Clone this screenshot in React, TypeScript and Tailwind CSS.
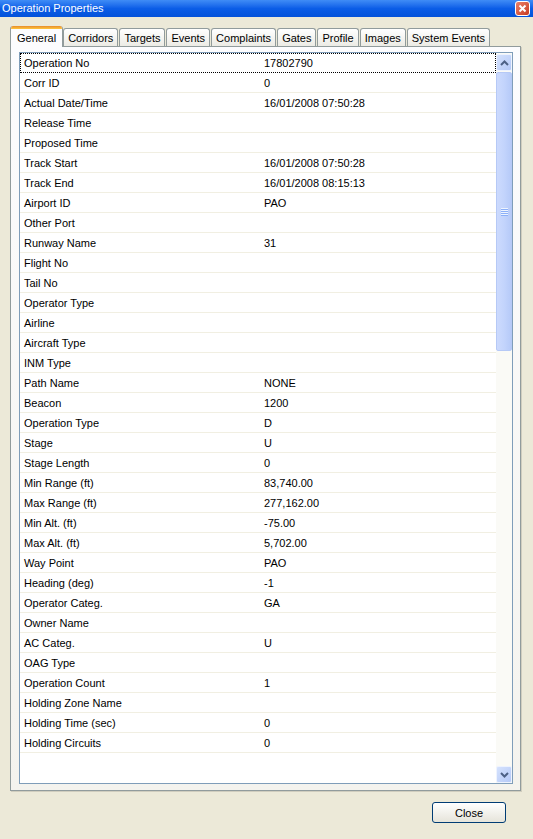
import React from "react";

const rows: [string, string][] = [
  ["Operation No", "17802790"],
  ["Corr ID", "0"],
  ["Actual Date/Time", "16/01/2008 07:50:28"],
  ["Release Time", ""],
  ["Proposed Time", ""],
  ["Track Start", "16/01/2008 07:50:28"],
  ["Track End", "16/01/2008 08:15:13"],
  ["Airport ID", "PAO"],
  ["Other Port", ""],
  ["Runway Name", "31"],
  ["Flight No", ""],
  ["Tail No", ""],
  ["Operator Type", ""],
  ["Airline", ""],
  ["Aircraft Type", ""],
  ["INM Type", ""],
  ["Path Name", "NONE"],
  ["Beacon", "1200"],
  ["Operation Type", "D"],
  ["Stage", "U"],
  ["Stage Length", "0"],
  ["Min Range (ft)", "83,740.00"],
  ["Max Range (ft)", "277,162.00"],
  ["Min Alt. (ft)", "-75.00"],
  ["Max Alt. (ft)", "5,702.00"],
  ["Way Point", "PAO"],
  ["Heading (deg)", "-1"],
  ["Operator Categ.", "GA"],
  ["Owner Name", ""],
  ["AC Categ.", "U"],
  ["OAG Type", ""],
  ["Operation Count", "1"],
  ["Holding Zone Name", ""],
  ["Holding Time (sec)", "0"],
  ["Holding Circuits", "0"],
];

const tabs = [
  "Corridors",
  "Targets",
  "Events",
  "Complaints",
  "Gates",
  "Profile",
  "Images",
  "System Events",
];

function Chevron({ up }: { up: boolean }) {
  return (
    <svg width="9" height="6" viewBox="0 0 9 6">
      <path
        d={up ? "M1 5 L4.5 1.5 L8 5" : "M1 1 L4.5 4.5 L8 1"}
        fill="none"
        stroke="#4D6185"
        strokeWidth="2"
      />
    </svg>
  );
}

function ScrollButton({ up }: { up: boolean }) {
  return (
    <div className="h-[17px] w-[16px] rounded-[2px] border border-[#EEF3FE] bg-gradient-to-br from-[#D5E2FD] to-[#B5C9F7] flex items-center justify-center">
      <Chevron up={up} />
    </div>
  );
}

export default function App() {
  return (
    <div className="w-[533px] h-[839px] bg-[#ECE9D8] flex flex-col overflow-hidden font-['Liberation_Sans',Arial,sans-serif] text-[11px] text-black">
      {/* caption bar */}
      <div className="h-[17px] flex items-center justify-between pl-[2px] pr-[3px] bg-gradient-to-b from-[#3F8CF6] via-[#0B5DE7] to-[#0452DA]">
        <span className="text-white text-[11px] leading-none">Operation Properties</span>
        <div className="w-[15px] h-[15px] rounded-[3px] border border-white bg-gradient-to-br from-[#E9806A] to-[#C8381C] flex items-center justify-center">
          <svg width="9" height="9" viewBox="0 0 9 9">
            <path d="M1.5 1.5 L7.5 7.5 M7.5 1.5 L1.5 7.5" stroke="white" strokeWidth="2" />
          </svg>
        </div>
      </div>

      <div className="pt-[9px] pl-[10px] flex flex-col">
        {/* tab strip */}
        <div className="h-[20px] flex items-end">
          <div className="relative z-10 -mb-px h-[21px] flex flex-col border-x border-[#919B9C] rounded-t-[3px] overflow-hidden bg-[#FCFCFE]">
            <div className="h-[3px] bg-gradient-to-b from-[#E68B2C] to-[#FFC73C]" />
            <div className="flex-1 px-[6px] pt-px leading-[17px]">General</div>
          </div>
          {tabs.map((t, i) => (
            <div
              key={t}
              className={`h-[18px] px-[4px] pt-px leading-[16px] border border-b-0 border-[#919B9C] rounded-t-[3px] bg-gradient-to-b from-white to-[#ECEBE5] ${i === 0 ? "" : "ml-[1px]"}`}
            >
              {t}
            </div>
          ))}
        </div>

        {/* tab page */}
        <div className="w-[511px] h-[745px] border border-[#919B9C] bg-gradient-to-b from-[#FCFCFE] to-[#F4F3EE] shadow-[1px_1px_0_#D0CDBE] pt-[5px] pl-[8px]">
          <div className="w-[494px] h-[732px] border border-[#7F9DB9] bg-white flex">
            <div className="flex-1 flex flex-col overflow-hidden">
              {rows.map(([label, value], i) => (
                <div
                  key={label}
                  className={
                    i === 0
                      ? "h-[20px] flex border border-dotted border-black pt-px leading-[17px]"
                      : "h-[20px] flex border-b border-[#F1EFE2] pl-px pt-px leading-[18px]"
                  }
                >
                  <div className="w-[243px] pl-[3px] whitespace-nowrap">{label}</div>
                  <div className="whitespace-nowrap">{value}</div>
                </div>
              ))}
            </div>

            {/* vertical scrollbar */}
            <div className="w-[16px] flex flex-col bg-[#FAFAF6] pt-px">
              <ScrollButton up />
              <div className="mt-px h-[279px] rounded-[2px] border border-[#B6C9F6] bg-gradient-to-r from-[#CCDAFD] via-[#C3D4FC] to-[#B6CAF8] flex items-center justify-center">
                <div className="flex flex-col w-[7px]">
                  <div className="h-px bg-[#EEF4FE]" />
                  <div className="h-px bg-[#8CB0F8]" />
                  <div className="h-px bg-[#EEF4FE]" />
                  <div className="h-px bg-[#8CB0F8]" />
                  <div className="h-px bg-[#EEF4FE]" />
                  <div className="h-px bg-[#8CB0F8]" />
                  <div className="h-px bg-[#EEF4FE]" />
                  <div className="h-px bg-[#8CB0F8]" />
                </div>
              </div>
              <div className="flex-1" />
              <ScrollButton up={false} />
            </div>
          </div>
        </div>
      </div>

      {/* dialog buttons */}
      <div className="flex justify-end pr-[27px] mt-[11px]">
        <div className="w-[74px] h-[21px] pt-px rounded-[3px] border border-[#003C74] bg-gradient-to-b from-white to-[#E6E4DA] flex items-center justify-center">
          Close
        </div>
      </div>
    </div>
  );
}
